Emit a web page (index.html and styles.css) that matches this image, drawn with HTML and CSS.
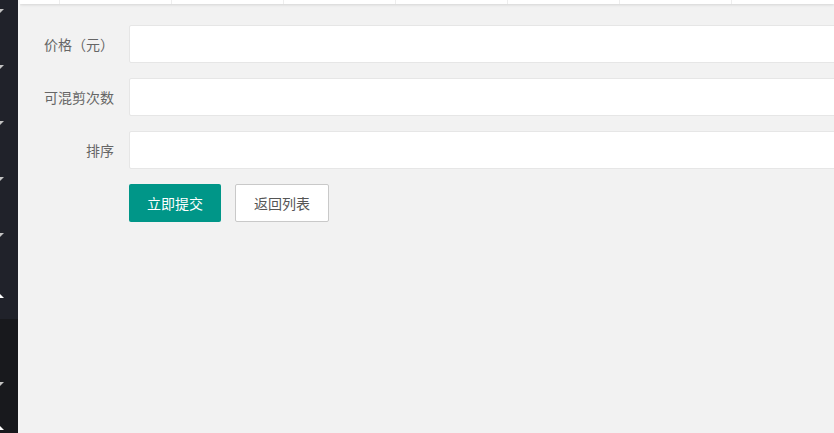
FILE: index.html
```html
<!DOCTYPE html>
<html lang="zh-CN">
<head>
  <meta charset="UTF-8">
  <title>编辑套餐</title>
  <link rel="stylesheet" href="styles.css">
</head>
<body>

  <div class="side">
    <div class="side-top">
      <div class="side-item"><span class="arrow-down"></span></div>
      <div class="side-item"><span class="arrow-down"></span></div>
      <div class="side-item"><span class="arrow-down"></span></div>
      <div class="side-item"><span class="arrow-down"></span></div>
      <div class="side-item"><span class="arrow-down"></span></div>
      <div class="side-item open"><span class="arrow-up"></span></div>
    </div>
    <div class="side-bottom">
      <span class="arrow-down"></span>
      <span class="arrow-up last"></span>
    </div>
  </div>

  <div class="main">
    <!-- tab bar -->
    <div class="tabs">
      <div class="tab first"></div>
      <div class="tab"></div>
      <div class="tab"></div>
      <div class="tab"></div>
      <div class="tab"></div>
      <div class="tab"></div>
      <div class="tab"></div>
      <div class="tab"></div>
    </div>

    <form class="form">
      <div class="form-item">
        <label class="form-label">价格（元）</label>
        <input type="text" class="form-input">
      </div>
      <div class="form-item">
        <label class="form-label">可混剪次数</label>
        <input type="text" class="form-input">
      </div>
      <div class="form-item">
        <label class="form-label">排序</label>
        <input type="text" class="form-input">
      </div>
      <div class="form-item">
        <div class="form-label"></div>
        <button type="button" class="btn btn-submit">立即提交</button>
        <button type="button" class="btn btn-back">返回列表</button>
      </div>
    </form>
  </div>

</body>
</html>
```

FILE: styles.css
```css
html, body {
  margin: 0;
  height: 433px;
  overflow: hidden;
}

body {
  display: flex;
  font-family: "Noto Sans CJK SC", "Noto Sans", sans-serif;
  font-size: 14px;
  color: #666;
}

/* sidebar */
.side {
  width: 18px;
  flex-shrink: 0;
  display: flex;
  flex-direction: column;
  overflow: hidden;
}

.side-top {
  height: 319px;
  background-color: #20222a;
}

.side-bottom {
  flex: 1;
  background-color: #18191d;
  padding-top: 63px;
}

.side-item {
  height: 56px;
  padding-top: 9px;
  box-sizing: border-box;
}

.side-item.open {
  padding-top: 12px;
}

.arrow-down,
.arrow-up {
  display: block;
  width: 0;
  height: 0;
  margin-left: -8px;
  border-style: solid;
}

.arrow-down {
  border-width: 6px 6px 0;
  border-color: #c2c2c2 transparent transparent;
}

.arrow-up {
  border-width: 0 6px 6px;
  border-color: transparent transparent #fff;
}

.arrow-up.last {
  margin-top: 36px;
}

/* main */
.main {
  flex: 1;
  background-color: #f2f2f2;
  border-left: 2px solid #f6f6f6;
  overflow: hidden;
}

.tabs {
  display: flex;
  height: 4px;
  background-color: #fff;
  box-shadow: 0 1px 3px rgba(0, 0, 0, 0.12);
}

.tab {
  width: 111px;
  flex-shrink: 0;
  border-right: 1px solid #eee;
}

.tab.first {
  width: 39px;
}

.form {
  width: 1000px;
  padding-top: 21px;
}

.form-item {
  display: flex;
  align-items: center;
  margin-bottom: 15px;
}

.form-label {
  width: 109px;
  padding-right: 15px;
  box-sizing: border-box;
  flex-shrink: 0;
  text-align: right;
  line-height: 38px;
  color: #666;
}

.form-input {
  flex: 1;
  height: 38px;
  box-sizing: border-box;
  border: 1px solid #e6e6e6;
  border-radius: 2px;
  background-color: #fff;
  padding: 0 10px;
  font-size: 14px;
  outline: none;
}

.btn {
  height: 38px;
  padding: 0 18px;
  font-size: 14px;
  font-family: inherit;
  border-radius: 2px;
  cursor: pointer;
}

.btn-submit {
  background-color: #009688;
  color: #fff;
  border: none;
}

.btn-back {
  margin-left: 14px;
  background-color: #fff;
  color: #555;
  border: 1px solid #c9c9c9;
}
```
